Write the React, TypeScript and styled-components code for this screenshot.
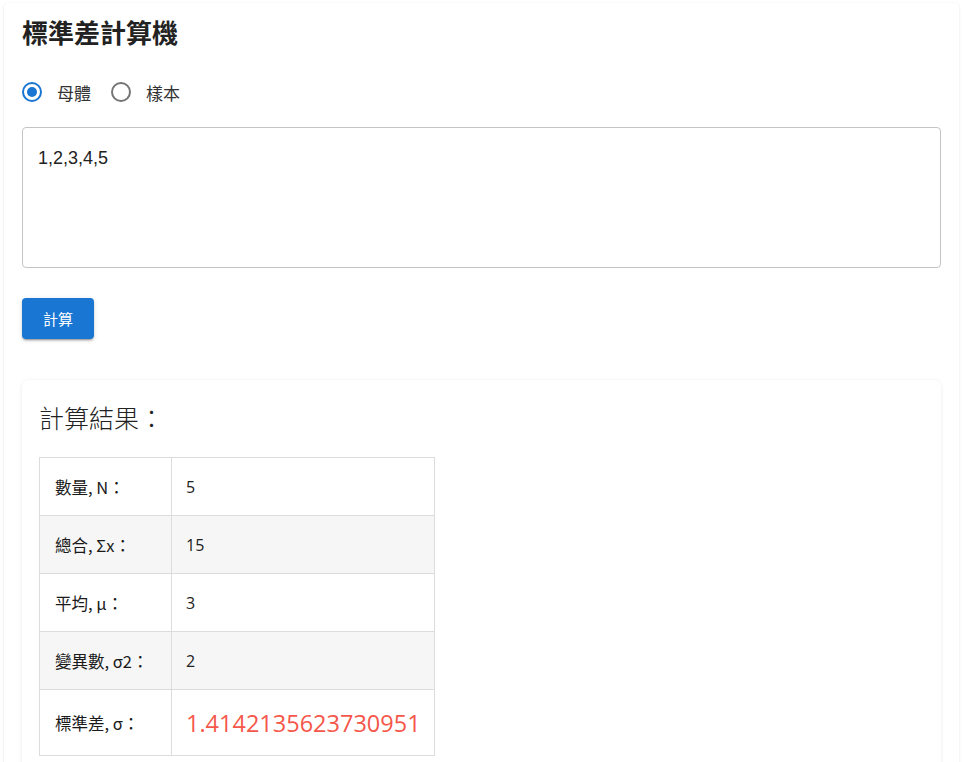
import React, { useState } from "react";
import styled, { createGlobalStyle } from "styled-components";

const Global = createGlobalStyle`
  html, body { margin: 0; padding: 0; background: #ffffff; }
  body {
    font-family: "Liberation Sans", "Noto Sans CJK TC", sans-serif;
    color: rgba(0,0,0,0.87);
  }
  * { box-sizing: border-box; }
`;

const Card = styled.div`
  margin: 3px 4px 0 4px;
  padding: 14px 18px 18px 18px;
  background: #fff;
  border-radius: 4px;
  box-shadow: 0 1px 3px rgba(0,0,0,0.10), 0 0 1px rgba(0,0,0,0.06);
  min-height: 800px;
`;

const Title = styled.h2`
  margin: 0;
  font-family: "Noto Sans CJK TC", sans-serif;
  font-size: 26px;
  font-weight: 700;
  line-height: 30px;
  color: #222;
`;

const RadioRow = styled.div`
  display: flex;
  align-items: center;
  gap: 20px;
  height: 42px;
  margin-top: 24px;
`;

const RadioLabel = styled.label`
  display: flex;
  align-items: center;
  gap: 15px;
  font-family: "Noto Sans CJK TC", sans-serif;
  font-size: 17px;
  color: #333;
  cursor: pointer;
`;

const RadioCircle = styled.span<{ $checked: boolean }>`
  width: 20px;
  height: 20px;
  border-radius: 50%;
  border: 2px solid ${(p) => (p.$checked ? "#1976d2" : "#757575")};
  display: flex;
  align-items: center;
  justify-content: center;
  &::after {
    content: "";
    width: 10px;
    height: 10px;
    border-radius: 50%;
    background: #1976d2;
    display: ${(p) => (p.$checked ? "block" : "none")};
  }
`;

const TextArea = styled.textarea`
  display: block;
  width: 100%;
  height: 141px;
  margin-top: 14px;
  padding: 20px 15px 16px 15px;
  border: 1px solid #c4c4c4;
  border-radius: 4px;
  font-family: "Liberation Sans", sans-serif;
  font-size: 18px;
  line-height: 20px;
  color: #222;
  resize: none;
  outline: none;
`;

const Button = styled.button`
  display: block;
  margin-top: 30px;
  width: 72px;
  height: 41px;
  border: none;
  border-radius: 4px;
  background: #1976d2;
  color: #fff;
  font-family: "Noto Sans CJK TC", sans-serif;
  font-size: 15px;
  box-shadow: 0 3px 1px -2px rgba(0,0,0,0.2), 0 2px 2px 0 rgba(0,0,0,0.14), 0 1px 5px 0 rgba(0,0,0,0.12);
  cursor: pointer;
`;

const ResultCard = styled.div`
  margin-top: 41px;
  padding: 17px 17px 18px 17px;
  border-radius: 6px;
  background: #fff;
  box-shadow: 0 1px 4px rgba(0,0,0,0.08), 0 0 1px rgba(0,0,0,0.05);
  min-height: 420px;
`;

const ResultTitle = styled.h3`
  margin: 0 0 20px 0;
  font-family: "Noto Sans CJK TC", sans-serif;
  font-size: 25px;
  font-weight: 300;
  line-height: 40px;
  color: #222;
`;

const Table = styled.table`
  border-collapse: collapse;
  width: 396px;
`;

const Row = styled.tr<{ $shade: boolean; $tall?: boolean }>`
  background: ${(p) => (p.$shade ? "#f6f6f6" : "#fff")};
  height: ${(p) => (p.$tall ? "66px" : "58px")};
`;

const LabelCell = styled.th`
  width: 132px;
  border: 1px solid #dcdcdc;
  padding: 0 0 0 15px;
  text-align: left;
  font-family: "Noto Sans CJK TC", sans-serif;
  font-size: 16.5px;
  font-weight: 400;
  color: #1a1a1a;
`;

const ValueCell = styled.td<{ $highlight?: boolean }>`
  border: 1px solid #dcdcdc;
  padding: 0 0 0 14px;
  font-family: "Open Sans", "Noto Sans", sans-serif;
  font-size: ${(p) => (p.$highlight ? "23.5px" : "16px")};
  color: ${(p) => (p.$highlight ? "#f5574a" : "#222")};
`;

const rows = [
  { label: "數量, N：", value: "5" },
  { label: "總合, Σx：", value: "15" },
  { label: "平均, μ：", value: "3" },
  { label: "變異數, σ2：", value: "2" },
  { label: "標準差, σ：", value: "1.4142135623730951", highlight: true },
];

export default function App() {
  const [mode, setMode] = useState<"pop" | "sample">("pop");
  return (
    <>
      <Global />
      <Card>
        <Title>標準差計算機</Title>
        <RadioRow>
          <RadioLabel onClick={() => setMode("pop")}>
            <RadioCircle $checked={mode === "pop"} />
            母體
          </RadioLabel>
          <RadioLabel onClick={() => setMode("sample")}>
            <RadioCircle $checked={mode === "sample"} />
            樣本
          </RadioLabel>
        </RadioRow>
        <TextArea defaultValue="1,2,3,4,5" />
        <Button>計算</Button>
        <ResultCard>
          <ResultTitle>計算結果：</ResultTitle>
          <Table>
            <tbody>
              {rows.map((r, i) => (
                <Row key={r.label} $shade={i % 2 === 1} $tall={r.highlight}>
                  <LabelCell>{r.label}</LabelCell>
                  <ValueCell $highlight={r.highlight}>{r.value}</ValueCell>
                </Row>
              ))}
            </tbody>
          </Table>
        </ResultCard>
      </Card>
    </>
  );
}
